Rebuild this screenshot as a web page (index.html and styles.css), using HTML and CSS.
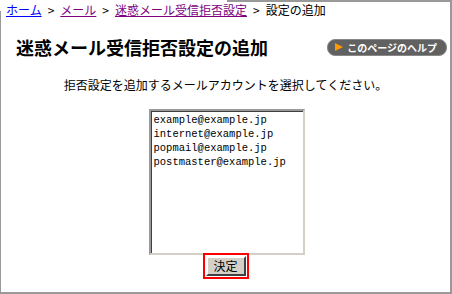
FILE: index.html
```html
<!DOCTYPE html>
<html lang="ja">
<head>
<meta charset="UTF-8">
<title>迷惑メール受信拒否設定の追加</title>
<link rel="stylesheet" href="styles.css">
</head>
<body>
<div class="frame">
  <div class="crumbs">
    <a href="#" class="home">ホーム</a><span class="sep">&gt;</span><a href="#">メール</a><span class="sep">&gt;</span><a href="#">迷惑メール受信拒否設定</a><span class="sep">&gt;</span>設定の追加
  </div>

  <div class="head">
    <h1>迷惑メール受信拒否設定の追加</h1>
    <a href="#" class="help"><span class="tri"></span>このページのヘルプ</a>
  </div>

  <p class="lead">拒否設定を追加するメールアカウントを選択してください。</p>

  <form class="pick">
    <div class="listbox">
      <div class="opt">example@example.jp</div>
      <div class="opt">internet@example.jp</div>
      <div class="opt">popmail@example.jp</div>
      <div class="opt">postmaster@example.jp</div>
    </div>
    <span class="ok"><button type="button">決定</button></span>
  </form>
</div>
</body>
</html>
```

FILE: styles.css
```css
body {
  margin: 0;
  font-family: "Noto Sans CJK JP", sans-serif;
  font-size: 12px;
  color: #000;
  background: #fff;
}

.frame {
  position: relative;
  box-sizing: border-box;
  width: 452px;
  height: 294px;
  border: 2px solid #999;
  border-left-width: 1px;
}
/* the top left corner of the frame is left open */
.frame::before {
  content: "";
  position: absolute;
  top: -2px;
  left: -1px;
  width: 227px;
  height: 11px;
  background: #fff;
}

.crumbs {
  position: relative;
  padding: 0 0 0 5px;
  height: 16px;
  line-height: 16px;
}
.crumbs a {
  color: #800080;
}
.crumbs a.home {
  color: #0000ff;
}
.sep {
  margin: 0 6px;
}

.head {
  display: flex;
  align-items: center;
  justify-content: space-between;
  padding: 18px 3px 0 15px;
}
.head h1 {
  margin: 0;
  font-size: 18px;
  line-height: 22px;
  font-weight: bold;
}
.help {
  display: flex;
  align-items: center;
  gap: 4px;
  height: 15px;
  padding: 0 9px 0 7px;
  border-radius: 8px;
  background: #616161;
  border: 1px solid #888;
  color: #fff;
  font-size: 10px;
  font-weight: bold;
  text-decoration: none;
}
.tri {
  width: 0;
  height: 0;
  border-top: 4px solid transparent;
  border-bottom: 4px solid transparent;
  border-left: 8px solid #ff9900;
}

.lead {
  margin: 19px 0 0;
  text-align: center;
  line-height: 16px;
}

.pick {
  display: flex;
  flex-direction: column;
  align-items: center;
  margin-top: 16px;
}
.listbox {
  box-sizing: border-box;
  width: 156px;
  height: 146px;
  margin-left: 2px;
  padding: 2px 3px;
  border-style: solid;
  border-width: 2px;
  border-color: #9a9a9a #d4d0c8 #d4d0c8 #9a9a9a;
  box-shadow: inset 1px 1px 0 #404040;
  font-family: "Liberation Mono", "DejaVu Sans Mono", monospace;
  font-size: 10.5px;
  line-height: 14px;
}
.ok {
  margin-top: -2px;
  padding: 1px;
  border: 2px solid #f00;
}
.ok button {
  display: block;
  width: 40px;
  height: 20px;
  padding: 0;
  background: #d4d0c8;
  border: 2px solid;
  border-color: #fff #404040 #404040 #fff;
  font-family: "Noto Sans CJK JP", sans-serif;
  font-size: 12px;
  line-height: 16px;
  color: #000;
}
```
